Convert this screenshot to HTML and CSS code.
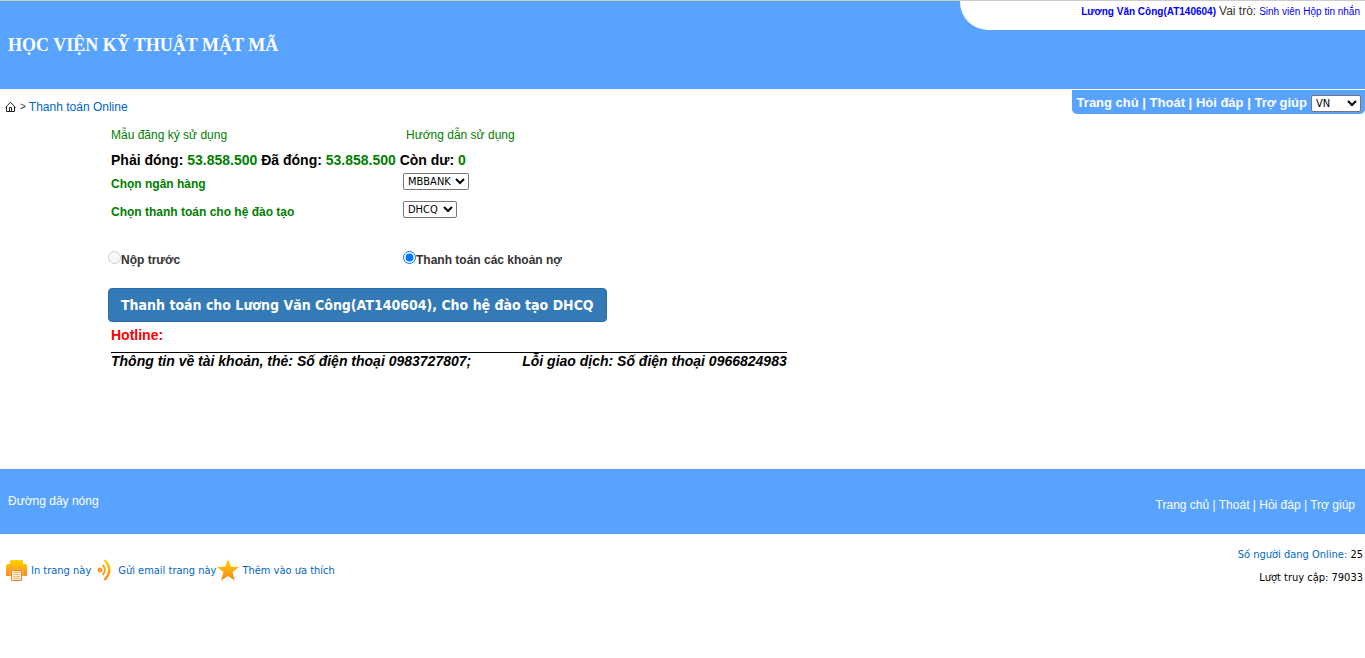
FILE: index.html
```html
<!DOCTYPE html>
<html lang="vi">
<head>
<meta charset="utf-8">
<title>Thanh toán Online</title>
<link rel="stylesheet" href="styles.css">
</head>
<body>
<header class="header">
  <h1 class="site-title">HỌC VIỆN KỸ THUẬT MẬT MÃ</h1>
  <div class="user-bar">
    <a class="user-name" href="#">Lương Văn Công(AT140604)</a>
    <span class="role-label">Vai trò:</span>
    <a href="#">Sinh viên</a>
    <a href="#">Hộp tin nhắn</a>
  </div>
</header>

<div class="toolbar">
  <nav class="breadcrumb" aria-label="Breadcrumb">
    <a class="home" href="#" aria-label="Trang chủ">
      <svg width="12" height="12" viewBox="0 0 12 12" fill="none" stroke="#222" stroke-width="1">
        <path d="M.5 6.500 5.500 1.200l5 5.300M1.500 5.500v5h8v-5M4.500 10.500V6.500h2v4"/>
      </svg>
    </a>
    <span>&gt;</span>
    <a href="#">Thanh toán Online</a>
  </nav>
  <nav class="top-nav" aria-label="Menu">
    <span><a href="#">Trang chủ</a> | <a href="#">Thoát</a> | <a href="#">Hỏi đáp</a> | <a href="#">Trợ giúp</a></span>
    <select class="select language" aria-label="Ngôn ngữ"><option>VN</option><option>EN</option></select>
  </nav>
</div>

<main class="content">
  <form class="payment">
    <div class="row guides">
      <a href="#">Mẫu đăng ký sử dụng</a>
      <a href="#">Hướng dẫn sử dụng</a>
    </div>
    <p class="balance">Phải đóng: <span class="amount">53.858.500</span> Đã đóng: <span class="amount">53.858.500</span> Còn dư: <span class="amount">0</span></p>
    <div class="row field">
      <label for="bank">Chọn ngân hàng</label>
      <div><select class="select bank" id="bank"><option>MBBANK</option></select></div>
    </div>
    <div class="row field">
      <label for="program">Chọn thanh toán cho hệ đào tạo</label>
      <div><select class="select program" id="program"><option>DHCQ</option></select></div>
    </div>
    <div class="row choices">
      <div class="choice"><input type="radio" name="kind" id="prepay" disabled><label for="prepay">Nộp trước</label></div>
      <div class="choice"><input type="radio" name="kind" id="debts" checked><label for="debts">Thanh toán các khoản nợ</label></div>
    </div>
    <button class="pay" type="button">Thanh toán cho Lương Văn Công(AT140604), Cho hệ đào tạo DHCQ</button>
  </form>
  <section class="hotline">
    <h2 class="hotline-title">Hotline:</h2>
    <p class="hotline-info"><span>Thông tin về tài khoản, thẻ: Số điện thoại 0983727807;</span><span>Lỗi giao dịch: Số điện thoại 0966824983</span></p>
  </section>
</main>

<footer>
  <div class="footer-bar">
    <span class="footer-hotline">Đường dây nóng</span>
    <nav class="footer-nav" aria-label="Menu cuối trang"><a href="#">Trang chủ</a> | <a href="#">Thoát</a> | <a href="#">Hỏi đáp</a> | <a href="#">Trợ giúp</a></nav>
  </div>
  <div class="footer-tools">
    <div class="tools">
      <a href="#" class="tool">
        <svg width="22" height="22" viewBox="0 0 22 22">
          <defs><linearGradient id="gold" x1="0" y1="0" x2="0" y2="1"><stop offset="0" stop-color="#ffd500"/><stop offset="1" stop-color="#f7861f"/></linearGradient></defs>
          <path d="M4 1h13v4h2q2 0 2 2v9q0 1-1 1H1q-1 0-1-1V7q0-2 2-2h2z" fill="url(#gold)"/>
          <path d="M5.500 11.500h10v10h-10z" fill="#fff3df" stroke="#f58220"/>
          <path d="M7 13.500h7M7 15.500h7M7 17.500h7M7 19.500h7" stroke="#fbb673"/>
          <path d="M4 17v-6.500h13V17" fill="none" stroke="#fcb34a"/>
        </svg>
        <span>In trang này</span>
      </a>
      <a href="#" class="tool email">
        <svg width="16" height="24" viewBox="0 0 16 24" fill="none">
          <circle cx="5" cy="12" r="2.500" fill="#f9a020"/>
          <path d="M7.500 7q5 5 0 10" stroke="#f9a020" stroke-width="2"/>
          <path d="M9.500 2q9.500 10 0 20" stroke="url(#gold)" stroke-width="2.500"/>
        </svg>
        <span>Gửi email trang này</span>
      </a>
      <a href="#" class="tool favorite">
        <svg width="22" height="22" viewBox="0 0 22 22"><path d="m11 0 3 7.700 8 .2-6.400 5.200 2.300 8.400L11 17l-6.900 4.500 2.300-8.400L0 7.900l8-.2z" fill="url(#gold)"/></svg>
        <span>Thêm vào ưa thích</span>
      </a>
    </div>
    <div class="stats">
      <div><a href="#">Số người đang Online:</a> 25</div>
      <div>Lượt truy cập: 79033</div>
    </div>
  </div>
</footer>
</body>
</html>
```
FILE: styles.css
```css
* {
  box-sizing: border-box;
}

body {
  margin: 0;
  background: #fff;
  color: #333;
  font: 12px/16px "Liberation Sans", Arial, sans-serif;
}

a {
  color: #0066cc;
  text-decoration: none;
}

.header {
  display: flex;
  justify-content: space-between;
  align-items: flex-start;
  border-top: 1px solid #ccc;
  background: #57a3ff;
  padding-bottom: 32px;
}

.site-title {
  margin: 0;
  padding: 32px 8px 0;
  color: #fff;
  font: bold 18px/24px "Liberation Serif", "Times New Roman", serif;
}

.user-bar {
  display: flex;
  justify-content: flex-end;
  align-items: baseline;
  gap: 3px;
  flex-basis: 405px;
  height: 29px;
  padding: 2px 5px 0 0;
  border-bottom-left-radius: 28px;
  background: #fff;
  font-size: 10px;
}

.user-bar a {
  color: #00f;
}

.user-name {
  font-weight: bold;
}

.role-label {
  font-size: 12px;
}

.toolbar {
  display: flex;
  justify-content: space-between;
  align-items: flex-start;
  padding-top: 1px;
}

.breadcrumb {
  display: flex;
  align-items: center;
  gap: 3px;
  padding: 9px 0 0 5px;
}

.breadcrumb span {
  font-size: 10px;
}

.home {
  display: flex;
}

.top-nav {
  display: flex;
  align-items: center;
  gap: 4px;
  height: 24px;
  padding: 2px 4px 0 5px;
  border-radius: 0 0 5px 5px;
  background: #57a3ff;
  color: #fff;
  font-size: 13px;
  font-weight: bold;
}

.top-nav a,
.footer-bar a {
  color: #fff;
}

.select {
  display: block;
  height: 17px;
  padding: 0;
  border: 1px solid #767676;
  border-radius: 2px;
  background: #fff;
  color: #000;
  font: 11px "DejaVu Sans Condensed", "Noto Sans", sans-serif;
}

.language {
  width: 50px;
}

.bank {
  width: 66px;
}

.program {
  width: 54px;
}

.content {
  padding: 12px 0 100px 108px;
}

.row {
  display: grid;
  grid-template-columns: 295px 1fr;
}

.guides a {
  padding-left: 3px;
  color: #008000;
}

.balance {
  margin: 9px 0 5px;
  padding-left: 3px;
  color: #000;
  font-size: 14px;
  font-weight: bold;
}

.amount {
  color: #008000;
}

.field {
  height: 28px;
}

.field label {
  padding: 3px 0 0 3px;
  color: #008000;
  font-weight: bold;
}

.choices {
  padding: 22px 0 20px;
}

.choice {
  display: flex;
  align-items: flex-start;
  font-weight: bold;
}

.choice input {
  width: 13px;
  height: 13px;
  margin: 0;
}

.choice label {
  padding-top: 1px;
}

.pay {
  height: 34px;
  padding: 0 12px;
  border: 1px solid #2e6da4;
  border-radius: 4px;
  background: #337ab7;
  color: #fff;
  font: bold 14px "DejaVu Sans Condensed", "Noto Sans", sans-serif;
}

.hotline {
  padding: 5px 0 0 3px;
  font-size: 14px;
}

.hotline-title {
  margin: 0;
  color: #f00;
  font-size: 14px;
}

.hotline-info {
  display: inline-flex;
  gap: 51px;
  margin: 9px 0 0;
  border-top: 1px solid #000;
  color: #000;
  font-style: italic;
  font-weight: bold;
}

.footer-bar {
  display: flex;
  justify-content: space-between;
  padding: 24px 10px 21px 8px;
  background: #57a3ff;
  color: #fff;
}

.footer-nav {
  padding-top: 4px;
}

.footer-tools {
  display: flex;
  justify-content: space-between;
  padding: 9px 2px 0 6px;
  color: #000;
  font: 11px/23px "DejaVu Sans Condensed", "Noto Sans", sans-serif;
}

.tools {
  display: flex;
  gap: 4px;
  padding-top: 15px;
}

.tool {
  display: flex;
  align-items: center;
  gap: 3px;
  height: 24px;
}

.email {
  gap: 7px;
}

.tools .favorite {
  margin-left: -3px;
}

.stats {
  text-align: right;
}
```
